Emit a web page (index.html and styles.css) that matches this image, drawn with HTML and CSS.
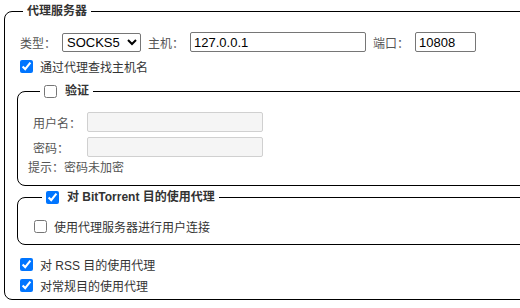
FILE: index.html
```html
<!DOCTYPE html>
<html lang="zh-CN">
<head>
    <meta charset="UTF-8">
    <meta name="viewport" content="width=device-width, initial-scale=1.0">
    <title>代理服务器</title>
    <link rel="stylesheet" href="styles.css">
</head>
<body>

<fieldset class="group outer">
    <legend class="title">代理服务器</legend>

    <div class="row">
        <label class="label">类型：</label>
        <select class="ctl type">
            <option>SOCKS5</option>
        </select>
        <label class="label">主机：</label>
        <input class="ctl host" type="text" value="127.0.0.1">
        <label class="label">端口：</label>
        <input class="ctl port" type="text" value="10808">
    </div>

    <div class="row check">
        <input type="checkbox" checked>
        <span>通过代理查找主机名</span>
    </div>

    <!-- Auth -->
    <fieldset class="group inner auth">
        <legend class="title sub">
            <input type="checkbox">
            <span>验证</span>
        </legend>
        <div class="fields">
            <label class="flabel">用户名：</label>
            <input class="ctl off" type="text" disabled>
            <label class="flabel">密码：</label>
            <input class="ctl off" type="password" disabled>
        </div>
        <div class="hint">提示：密码未加密</div>
    </fieldset>

    <!-- BitTorrent -->
    <fieldset class="group inner bt">
        <legend class="title sub">
            <input type="checkbox" checked>
            <span>对 BitTorrent 目的使用代理</span>
        </legend>
        <div class="row check small">
            <input type="checkbox">
            <span>使用代理服务器进行用户连接</span>
        </div>
    </fieldset>

    <div class="tail">
        <div class="row check small">
            <input type="checkbox" checked>
            <span>对 RSS 目的使用代理</span>
        </div>
        <div class="row check small">
            <input type="checkbox" checked>
            <span>对常规目的使用代理</span>
        </div>
    </div>
</fieldset>

</body>
</html>
```

FILE: styles.css
```css
body {
    margin: 0;
    overflow: hidden;
    font-family: "Liberation Sans", "Noto Sans CJK SC", sans-serif;
    font-size: 12px;
    color: #333;
    background-color: #fff;
}
.group {
    border: 1px solid #000;
    border-radius: 8px;
    min-width: 0;
}
.outer {
    width: 640px;
    margin: 3px 0 0 4px;
    padding: 10px 0 3px 12px;
}
.title {
    height: 17px;
    line-height: 17px;
    padding: 0 4px;
    margin-left: 6px;
    font-weight: bold;
    display: flex;
    align-items: center;
}
.title.sub {
    margin-left: 12px;
}
.title input {
    margin: 0 8px 0 0;
}
.row {
    display: flex;
    align-items: center;
    height: 24px;
    padding-left: 3px;
}
.label {
    color: #555;
    margin-right: 6px;
}
.ctl {
    box-sizing: border-box;
    height: 20px;
    margin: 0 7px 0 0;
    border: 1px solid #767676;
    border-radius: 2px;
    font-family: "Liberation Sans", Arial, sans-serif;
    font-size: 13px;
    color: #000;
    background-color: #fff;
    padding: 0 3px;
}
.type {
    width: 79px;
    height: 19px;
    padding: 0;
}
.host {
    width: 176px;
}
.port {
    width: 61px;
}
.check input {
    margin: 0 7px 0 0;
    width: 13px;
    height: 13px;
}
.small {
    height: 21px;
}
.inner {
    width: 640px;
    margin: 5px 0 0 0;
    padding: 12px 0 8px 10px;
}
.fields {
    display: grid;
    grid-template-columns: 59px 176px;
    grid-auto-rows: 20px;
    row-gap: 5px;
    align-items: center;
}
.flabel {
    padding-left: 5px;
    color: #555;
}
.off {
    width: 176px;
    border-color: #d0d0d0;
    background-color: #f5f5f5;
}
.hint {
    margin-top: 3px;
    height: 17px;
    line-height: 17px;
    color: #555;
}
.bt {
    margin-top: 3px;
    padding: 10px 0 7px 12px;
}
.bt .row {
    padding-left: 4px;
}
.tail {
    margin-top: 9px;
}
```
